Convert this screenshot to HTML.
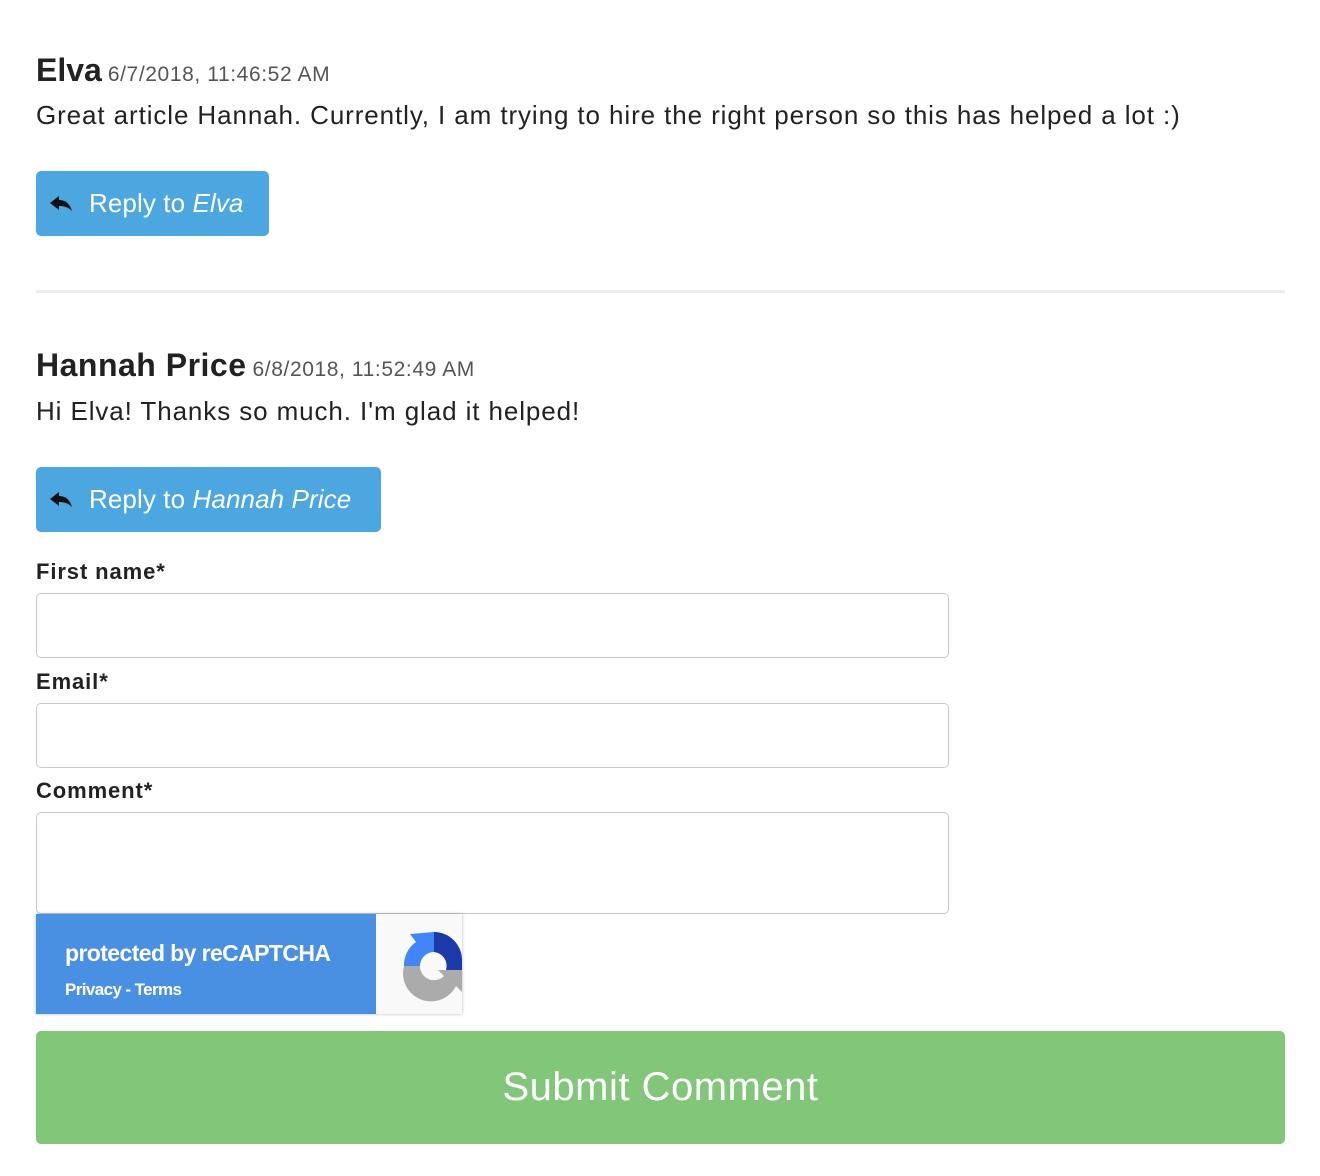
<!DOCTYPE html>
<html><head><meta charset="utf-8"><style>
*{margin:0;padding:0;box-sizing:border-box}
body{width:1320px;height:1176px;background:#fff;font-family:"Liberation Sans",sans-serif;color:#222;position:relative;overflow:hidden}
.a{position:absolute;white-space:nowrap}
.name{font-weight:bold;font-size:32px;color:#222;margin-right:6px}
.date{font-size:21px;color:#555;font-weight:normal;letter-spacing:0.6px}
.body{font-size:26px;color:#222;letter-spacing:0.9px}
.btn{position:absolute;background:#4ca7e0;border-radius:5px;color:#fff;font-size:26px;display:flex;align-items:center;letter-spacing:0.1px}
.btn svg{margin-left:13px;margin-right:16px}
.lbl{font-size:22px;font-weight:bold;color:#222;letter-spacing:0.9px}
.inp{position:absolute;left:36px;width:913px;border:1px solid #c8c8c8;border-radius:5px;background:#fff}
</style></head><body>
<div class="a" style="left:36px;top:52px"><span class="name">Elva</span><span class="date">6/7/2018, 11:46:52 AM</span></div>
<div class="a body" style="left:36px;top:100px">Great article Hannah. Currently, I am trying to hire the right person so this has helped a lot :)</div>
<div class="btn" style="left:36px;top:171px;width:233px;height:65px"><svg width="24" height="18" viewBox="0 0 24 18"><path d="M1 8 L10 1 L10 5 C17 5 21 9 23 16 C19 12 15 11 10 11 L10 15 Z" fill="#111"/></svg><span>Reply to <i>Elva</i></span></div>
<div class="a" style="left:36px;top:290px;width:1249px;height:3px;background:#ececec"></div>
<div class="a" style="left:36px;top:347px"><span class="name" style="letter-spacing:0.5px">Hannah Price</span><span class="date">6/8/2018, 11:52:49 AM</span></div>
<div class="a body" style="left:36px;top:396px">Hi Elva! Thanks so much. I'm glad it helped!</div>
<div class="btn" style="left:36px;top:467px;width:345px;height:65px"><svg width="24" height="18" viewBox="0 0 24 18"><path d="M1 8 L10 1 L10 5 C17 5 21 9 23 16 C19 12 15 11 10 11 L10 15 Z" fill="#111"/></svg><span>Reply to <i>Hannah Price</i></span></div>
<div class="a lbl" style="left:36px;top:559px">First name*</div>
<div class="inp" style="top:593px;height:65px"></div>
<div class="a lbl" style="left:36px;top:669px">Email*</div>
<div class="inp" style="top:703px;height:65px"></div>
<div class="a lbl" style="left:36px;top:778px">Comment*</div>
<div class="inp" style="top:812px;height:102px"></div>
<div class="a" style="left:36px;top:914px;width:426px;height:100px;box-shadow:0 0 3px rgba(0,0,0,0.3);background:#f9f9f9">
 <div style="position:absolute;left:0;top:0;width:340px;height:100px;background:#4a90e2;color:#fff">
  <div style="position:absolute;left:29px;top:26px;font-size:23px;font-weight:bold;letter-spacing:-0.6px">protected by reCAPTCHA</div>
  <div style="position:absolute;left:29px;top:66px;font-size:17px;font-weight:bold;letter-spacing:-0.6px">Privacy - Terms</div>
 </div>
 <svg style="position:absolute;left:364px;top:16px" width="62" height="78" viewBox="0 0 62 78">
  <path d="M34 2 A28 28 0 0 1 62 30 L62 46 L46 40 A14 14 0 0 0 34 22 Z" fill="#1c3aa9"/>
  <path d="M34 2 L34 22 A14 14 0 0 0 20 36 L4 36 A28 28 0 0 1 16 12 L10 4 Z" fill="#4285f4"/>
  <path d="M4 36 L20 36 A14 14 0 0 0 44 46 L38 40 L62 40 L62 62 L56 56 A28 28 0 0 1 4 36 Z" fill="#ababab"/>
 </svg>
</div>
<div class="a" style="left:36px;top:1031px;width:1249px;height:113px;background:#82c67a;border-radius:5px;color:#fff;font-size:40px;text-align:center;line-height:113px;letter-spacing:0.5px">Submit Comment</div>
</body></html>
